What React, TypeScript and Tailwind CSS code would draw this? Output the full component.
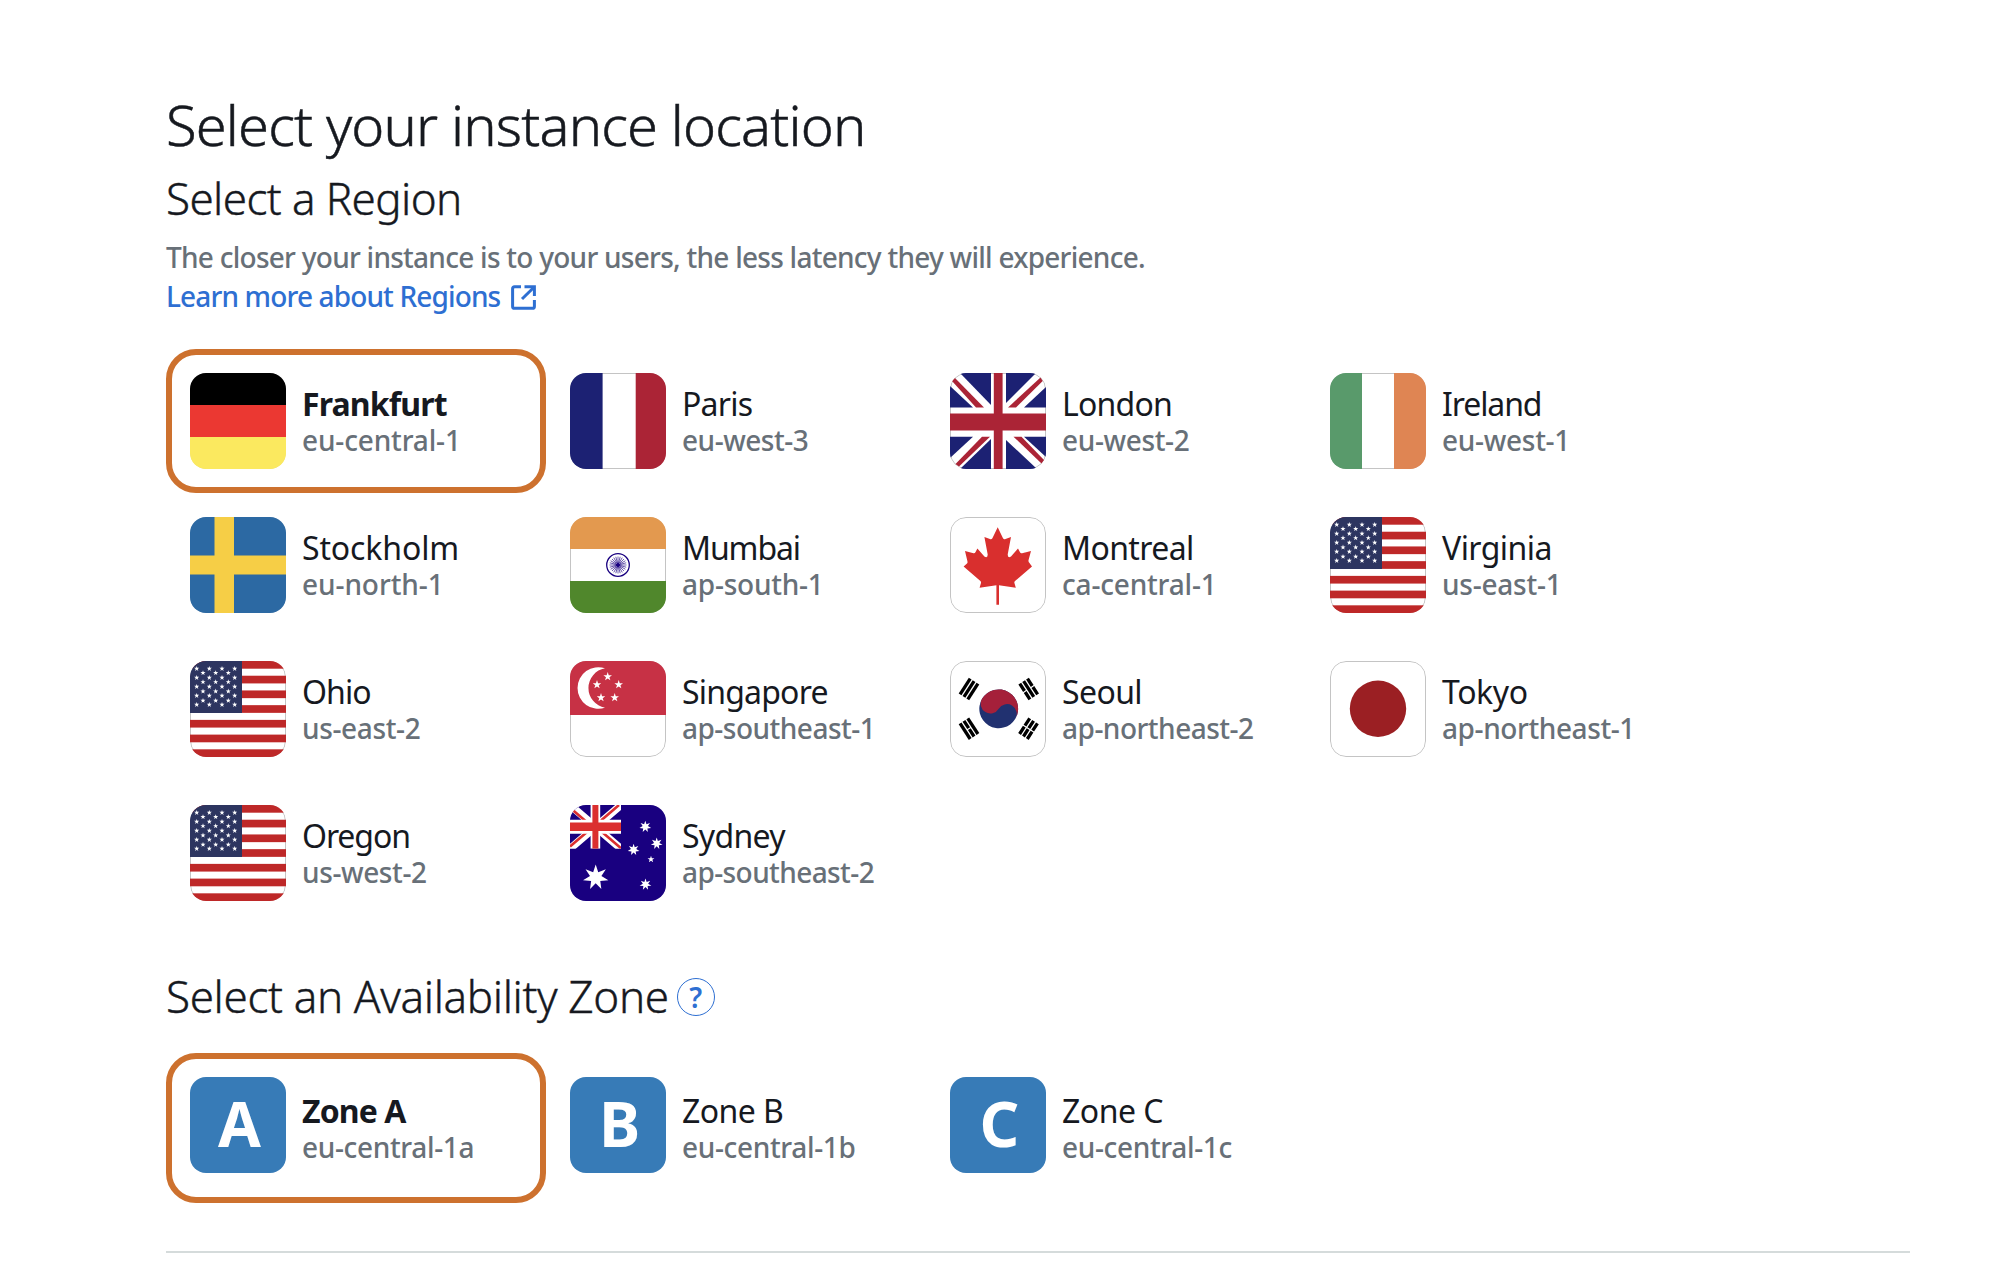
import React from "react";

const starPoints = (cx: number, cy: number, r: number, n = 5, inner = 0.4) =>
  Array.from({ length: n * 2 }, (_, i) => {
    const a = (Math.PI * i) / n - Math.PI / 2;
    const k = i % 2 ? r * inner : r;
    return `${(cx + k * Math.cos(a)).toFixed(2)},${(cy + k * Math.sin(a)).toFixed(2)}`;
  }).join(" ");

function Germany() {
  return (
    <>
      <rect width="96" height="32" fill="#000" />
      <rect y="32" width="96" height="32" fill="#eb3832" />
      <rect y="64" width="96" height="32" fill="#fbe95f" />
    </>
  );
}

function France() {
  return (
    <>
      <rect width="32.6" height="96" fill="#1c2173" />
      <rect x="65.7" width="30.3" height="96" fill="#ab2436" />
    </>
  );
}

function Britain() {
  return (
    <>
      <g fill="#1c2173">
        <path d="M10 0H41V32Z" />
        <path d="M0 13L23 34.5H0Z" />
        <path d="M56 0H86L56 30Z" />
        <path d="M96 14V34.5H74Z" />
        <path d="M0 63.7H23L0 85Z" />
        <path d="M41 66V96H10Z" />
        <path d="M56 67L87 96H56Z" />
        <path d="M74 63.7H96V84Z" />
      </g>
      <g fill="#ab2436">
        <path d="M43.8 0H52.6V96H43.8Z" />
        <path d="M0 40.4H96V57.6H0Z" />
        <path d="M2 8L5 5L34 34.5H26Z" />
        <path d="M58 34.5H66L92.7 8L90.5 4.5Z" />
        <path d="M32 63.7H40L9 93.5L5.5 91Z" />
        <path d="M63.5 63.7H71.5L94 87L91.5 90.5Z" />
      </g>
    </>
  );
}

function Ireland() {
  return (
    <>
      <rect width="32" height="96" fill="#599a6b" />
      <rect x="64" width="32" height="96" fill="#df8553" />
    </>
  );
}

function Sweden() {
  return (
    <>
      <rect width="96" height="96" fill="#2c69a3" />
      <path d="M24.5 0H44V96H24.5Z M0 38.6H96V57.4H0Z" fill="#f6ce46" />
    </>
  );
}

function India() {
  return (
    <>
      <rect width="96" height="32" fill="#e3994f" />
      <rect y="64" width="96" height="32" fill="#50872c" />
      <g stroke="#190080" fill="none">
        <circle cx="48" cy="48" r="11.3" strokeWidth="1.3" />
        <circle cx="48" cy="48" r="1.6" fill="#190080" />
        {Array.from({ length: 24 }, (_, i) => (
          <line key={i} x1="48" y1="46" x2="48" y2="39.5" strokeWidth="0.6" transform={`rotate(${i * 15} 48 48)`} />
        ))}
      </g>
    </>
  );
}

function Canada() {
  return (
    <path
      fill="#d92f2e"
      d="M47.7 10.3L53 21.3Q54 22.8 55.5 22L61 20L57.7 37.5Q57.7 41.5 61 39.5L68 31.5L70 35.3Q70.6 36.5 72 36.2L81 34L78.5 43.2Q78.3 45 79.3 45.8L82 49.4L65 64Q64 65 64.5 66.3L65.8 70.7L49 68.3V87.8H46.4V68.3L29.6 70.7L30.9 66.3Q31.4 65 30.4 64L13.6 49.4L17 46.6Q17.9 45.8 17.3 43.8L15 34L23.5 36.2Q24.8 36.5 25.4 35.3L27.4 31.5L34.4 39.5Q37.7 41.5 37.7 37.5L34.4 20L39.9 22Q41.4 22.8 42.4 21.3Z"
    />
  );
}

function UnitedStates() {
  const stars: [number, number][] = [];
  [7.7, 16.7, 25.7, 34.7, 43.7].forEach((y) => [6.7, 19.3, 32, 44.7].forEach((x) => stars.push([x, y])));
  [11.9, 21, 30.3, 39.6].forEach((y) => [13, 25.7, 38.3].forEach((x) => stars.push([x, y])));
  return (
    <>
      {Array.from({ length: 7 }, (_, i) => (
        <rect key={i} y={i * 14.72} width="96" height="7.7" fill="#be2828" />
      ))}
      <rect width="52" height="52" fill="#2d3560" />
      {stars.map(([x, y]) => (
        <polygon key={`${x}-${y}`} points={starPoints(x, y, 2.7)} fill="#fff" />
      ))}
    </>
  );
}

function SingaporeFlag() {
  return (
    <>
      <rect width="96" height="54" fill="#c73145" />
      <path d="M35 7.3A20.8 20.8 0 1 0 35 46.7A20 20 0 0 1 35 7.3Z" fill="#fff" />
      {[[37.7, 15.6], [27, 23.6], [48.7, 23.6], [31, 36.6], [44.7, 36.6]].map(([x, y]) => (
        <polygon key={x} points={starPoints(x, y, 4.5)} fill="#fff" />
      ))}
    </>
  );
}

function Trigram({ x, y, angle, broken }: { x: number; y: number; angle: number; broken: boolean[] }) {
  return (
    <g transform={`translate(${x} ${y}) rotate(${angle})`} stroke="#000" strokeWidth="3.3">
      {broken.map((b, i) => (
        <path key={i} d={b ? "M0 -9.3V-0.6M0 0.6V9.3" : "M0 -9.3V9.3"} transform={`translate(${(i - 1) * 4.6} 0)`} />
      ))}
    </g>
  );
}

function Korea() {
  return (
    <>
      <g transform="translate(48.7 47.8) rotate(31)">
        <circle r="19.4" fill="#213170" />
        <path d="M-19.4 0A19.4 19.4 0 0 1 19.4 0A9.7 9.7 0 0 0 0 0A9.7 9.7 0 0 1 -19.4 0Z" fill="#a5203a" />
      </g>
      <Trigram x={19} y={28} angle={33} broken={[false, false, false]} />
      <Trigram x={78.7} y={28} angle={-33} broken={[true, false, true]} />
      <Trigram x={19} y={67.7} angle={-33} broken={[false, true, false]} />
      <Trigram x={78.5} y={67.7} angle={33} broken={[true, true, true]} />
    </>
  );
}

function Japan() {
  return <circle cx="48" cy="47.8" r="28.2" fill="#9b1f23" />;
}

function Australia() {
  return (
    <>
      <rect width="96" height="96" fill="#190080" />
      <svg width="51" height="43.7" viewBox="0 0 51 43.7">
        <path d="M0 0L51 43.7M51 0L0 43.7" stroke="#fff" strokeWidth="7.6" />
        <path d="M1.5 4L17 17.3M49 0L31 15.5M0 41.5L17 27M32 27L51 43.2" stroke="#db2f2f" strokeWidth="2.6" />
        <path d="M25.4 0V43.7" stroke="#fff" strokeWidth="9.6" />
        <path d="M0 21.7H51" stroke="#fff" strokeWidth="14" />
        <path d="M25.4 0V43.7" stroke="#db2f2f" strokeWidth="6" />
        <path d="M0 21.7H51" stroke="#db2f2f" strokeWidth="8.6" />
      </svg>
      <g fill="#fff">
        <polygon points={starPoints(25.7, 72.4, 13, 7, 0.45)} />
        <polygon points={starPoints(75.3, 21.7, 6, 7, 0.45)} />
        <polygon points={starPoints(86.7, 38.5, 6, 7, 0.45)} />
        <polygon points={starPoints(63.6, 44.7, 6, 7, 0.45)} />
        <polygon points={starPoints(75.5, 79.4, 6, 7, 0.45)} />
        <polygon points={starPoints(81, 54.4, 3.6)} />
      </g>
    </>
  );
}

type Place = { name: string; code: string; nameTracking: string; codeTracking: string };
type Region = Place & { Flag: () => React.ReactElement };

const regions: Region[] = [
  { name: "Frankfurt", code: "eu-central-1", nameTracking: "tracking-[-0.85px]", codeTracking: "tracking-[-0.15px]", Flag: Germany },
  { name: "Paris", code: "eu-west-3", nameTracking: "tracking-[-0.77px]", codeTracking: "tracking-[-0.49px]", Flag: France },
  { name: "London", code: "eu-west-2", nameTracking: "tracking-[-0.79px]", codeTracking: "tracking-[-0.36px]", Flag: Britain },
  { name: "Ireland", code: "eu-west-1", nameTracking: "tracking-[-1.1px]", codeTracking: "tracking-[-0.29px]", Flag: Ireland },
  { name: "Stockholm", code: "eu-north-1", nameTracking: "tracking-[-0.13px]", codeTracking: "tracking-[-0.08px]", Flag: Sweden },
  { name: "Mumbai", code: "ap-south-1", nameTracking: "tracking-[-1.1px]", codeTracking: "tracking-[-0.24px]", Flag: India },
  { name: "Montreal", code: "ca-central-1", nameTracking: "tracking-[-0.61px]", codeTracking: "tracking-[-0.18px]", Flag: Canada },
  { name: "Virginia", code: "us-east-1", nameTracking: "tracking-[-0.55px]", codeTracking: "tracking-[-0.23px]", Flag: UnitedStates },
  { name: "Ohio", code: "us-east-2", nameTracking: "tracking-[-0.9px]", codeTracking: "tracking-[-0.36px]", Flag: UnitedStates },
  { name: "Singapore", code: "ap-southeast-1", nameTracking: "tracking-[-0.8px]", codeTracking: "tracking-[-0.51px]", Flag: SingaporeFlag },
  { name: "Seoul", code: "ap-northeast-2", nameTracking: "tracking-[-0.61px]", codeTracking: "tracking-[-0.5px]", Flag: Korea },
  { name: "Tokyo", code: "ap-northeast-1", nameTracking: "tracking-[-0.41px]", codeTracking: "tracking-[-0.4px]", Flag: Japan },
  { name: "Oregon", code: "us-west-2", nameTracking: "tracking-[-1.1px]", codeTracking: "tracking-[-0.39px]", Flag: UnitedStates },
  { name: "Sydney", code: "ap-southeast-2", nameTracking: "tracking-[-0.7px]", codeTracking: "tracking-[-0.59px]", Flag: Australia },
];

const zones: (Place & { letter: string })[] = [
  { letter: "A", name: "Zone A", code: "eu-central-1a", nameTracking: "tracking-[-0.9px]", codeTracking: "tracking-[-0.34px]" },
  { letter: "B", name: "Zone B", code: "eu-central-1b", nameTracking: "tracking-[-0.56px]", codeTracking: "tracking-[-0.34px]" },
  { letter: "C", name: "Zone C", code: "eu-central-1c", nameTracking: "tracking-[-0.5px]", codeTracking: "tracking-[-0.34px]" },
];

function FlagTile({ Flag }: { Flag: Region["Flag"] }) {
  return (
    <svg viewBox="0 0 96 96" className="size-24 shrink-0 rounded-2xl">
      <rect width="96" height="96" fill="#fff" />
      <rect x="0.5" y="0.5" width="95" height="95" rx="15.5" fill="none" stroke="#c4c4c4" />
      <Flag />
    </svg>
  );
}

function ZoneTile({ letter }: { letter: string }) {
  return (
    <div className="size-24 shrink-0 rounded-2xl bg-[#377bb7] pl-[3px] text-center text-[62px] leading-[92px] font-bold text-white">
      {letter}
    </div>
  );
}

function ExternalIcon() {
  return (
    <svg viewBox="0 0 25 25" className="mt-px size-[25px]" fill="none" stroke="currentColor" strokeWidth="3">
      <path d="M10 1.8H3.5Q1.6 1.8 1.6 3.7V21.4Q1.6 23.3 3.5 23.3H21.5Q23.4 23.3 23.4 21.4V15" />
      <path d="M13.5 1.8H23.4V11" />
      <path d="M23 2.2L11 14" />
    </svg>
  );
}

function Card({ selected, tall, icon, place }: { selected: boolean; tall?: boolean; icon: React.ReactNode; place: Place }) {
  return (
    <div className={`flex items-start gap-4 rounded-[30px] border-[6px] p-[18px] ${tall ? "h-[150px]" : "h-36"} ${selected ? "border-[#cd712e]" : "border-transparent"}`}>
      {icon}
      <div className={`whitespace-nowrap ${tall ? "pt-4" : "pt-[13px]"}`}>
        <div className={`text-[32px] leading-9 ${selected ? "font-bold" : ""} ${place.nameTracking}`}>{place.name}</div>
        <div className={`text-[28px] leading-[37px] font-medium text-[#687078] ${place.codeTracking}`}>{place.code}</div>
      </div>
    </div>
  );
}

export default function App() {
  return (
    <div className="min-h-[1270px] bg-white pt-[88px] pr-[92px] pl-[166px] font-['Noto_Sans',sans-serif] text-[#16191f]">
      <h1 className="text-[56px] leading-[72px] font-light tracking-[-0.83px] [-webkit-text-stroke:0.5px]">Select your instance location</h1>
      <h2 className="mt-[10px] text-[44px] leading-[56px] font-light tracking-[-0.6px] [-webkit-text-stroke:0.4px]">Select a Region</h2>
      <div className="mt-3 text-[28px] leading-[39px] font-medium">
        <p className="tracking-[-0.74px] text-[#687078]">The closer your instance is to your users, the less latency they will experience.</p>
        <a className="flex w-fit items-center gap-[11px] tracking-[-0.86px] text-[#2e6fd2]">
          Learn more about Regions
          <ExternalIcon />
        </a>
      </div>
      <div className="mt-[33px] grid grid-cols-[repeat(4,380px)]">
        {regions.map((r, i) => (
          <Card key={r.name} selected={i === 0} icon={<FlagTile Flag={r.Flag} />} place={r} />
        ))}
      </div>
      <div className="mt-[43px] flex h-14 items-center gap-2">
        <h2 className="text-[44px] leading-[56px] font-light tracking-[-0.36px] [-webkit-text-stroke:0.4px]">Select an Availability Zone</h2>
        <span className="mt-px flex size-[38px] items-center justify-center rounded-full border-[1.5px] border-[#2e6fd2] text-[28px] leading-none font-semibold text-[#2e6fd2]">?</span>
      </div>
      <div className="mt-[29px] grid grid-cols-[repeat(4,380px)]">
        {zones.map((z, i) => (
          <Card key={z.letter} tall selected={i === 0} icon={<ZoneTile letter={z.letter} />} place={z} />
        ))}
      </div>
      <hr className="mt-12 border-t-2 border-[#d5dbdb]" />
    </div>
  );
}
